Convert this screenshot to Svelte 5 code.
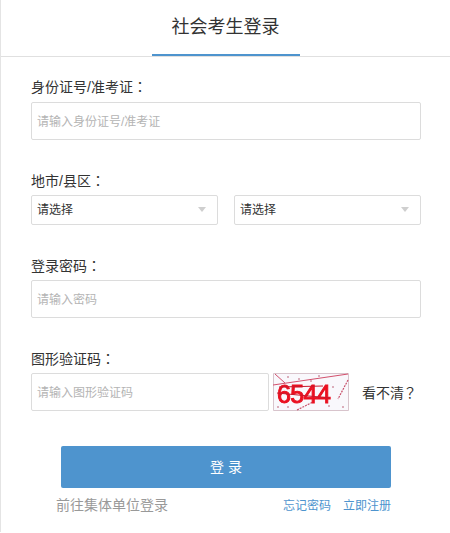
<script>
  // login form for the social candidate tab
  let idNumber = $state('');
  let password = $state('');
  let captcha = $state('');
</script>

<div class="panel">
  <div class="tabs">
    <div class="tab">社会考生登录</div>
  </div>

  <form class="form" onsubmit={(e) => e.preventDefault()}>
    <div class="field id-field">
      <div class="label">身份证号/准考证<span class="wide">：</span></div>
      <input class="text-input" placeholder="请输入身份证号/准考证" bind:value={idNumber} />
    </div>

    <div class="field area-field">
      <div class="label">地市/县区<span class="wide">：</span></div>
      <div class="selects">
        <div class="select">请选择<span class="arrow"></span></div>
        <div class="select">请选择<span class="arrow"></span></div>
      </div>
    </div>

    <div class="field pwd-field">
      <div class="label">登录密码<span class="wide">：</span></div>
      <input class="text-input" type="text" placeholder="请输入密码" bind:value={password} />
    </div>

    <div class="field code-field">
      <div class="label">图形验证码<span class="wide">：</span></div>
      <div class="code-row">
        <input class="text-input code-input" placeholder="请输入图形验证码" bind:value={captcha} />
        <svg class="captcha" viewBox="0 0 76 38" width="76" height="38">
          <rect width="76" height="38" fill="#f9f8fc" />
          <path d="M.5 .5H75.5V37.5H.5Z" fill="none" stroke="#d8c4cc" stroke-width="1" />
          <path d="M2 1L12 10M0 12L75 1" fill="none" stroke="#d2506c" stroke-width="1" />
          <path d="M75 7L65 26M24 37L40 29" fill="none" stroke="#c9526c" stroke-width="1.2" stroke-dasharray="2 1" />
          <text x="4" y="30" class="captcha-text">6544</text>
          <path d="M4 20L57 25M6 14L50 13" stroke="#c8182c" stroke-width="1" />
          <g fill="#b5506a">
            <circle cx="15" cy="4" r="0.8" /><circle cx="46" cy="3" r="0.8" /><circle cx="56" cy="33" r="0.8" />
            <circle cx="5" cy="34" r="0.8" /><circle cx="70" cy="34" r="0.8" /><circle cx="38" cy="8" r="0.8" />
            <circle cx="26" cy="6" r="0.8" /><circle cx="60" cy="14" r="0.8" /><circle cx="15" cy="34" r="0.8" />
          </g>
        </svg>
        <a class="refresh" href="#refresh">看不清<span class="question">？</span></a>
      </div>
    </div>

    <div class="actions">
      <button class="submit" type="submit">登 录</button>
      <div class="links">
        <a class="unit-link" href="#unit">前往集体单位登录</a>
        <span class="right-links">
          <a href="#forgot">忘记密码</a>
          <a href="#register">立即注册</a>
        </span>
      </div>
    </div>
  </form>
</div>

<style>
  :global(body) {
    margin: 0;
    background: #fff;
  }

  .panel {
    width: 450px;
    height: 532px;
    box-sizing: border-box;
    border-left: 1px solid #e4e4e4;
    font-family: "Liberation Sans", "Noto Sans CJK SC", sans-serif;
    color: #333;
    font-size: 14px;
  }

  .tabs {
    height: 57px;
    box-sizing: border-box;
    border-bottom: 1px solid #e0e0e0;
    display: flex;
    justify-content: center;
    padding-left: 2px;
  }

  .tab {
    width: 148px;
    height: 56px;
    box-sizing: border-box;
    border-bottom: 2px solid #4e94ce;
    text-align: center;
    font-size: 18px;
    line-height: 54px;
    color: #333;
    margin-right: 2px;
  }

  .form {
    padding: 0 29px 0 30px;
  }

  .wide,
  .question {
    font-family: "Liberation Sans", "Noto Sans CJK TC", sans-serif;
  }

  .question {
    margin-left: -1px;
  }

  .label {
    height: 22px;
    line-height: 20px;
    margin-bottom: 3px;
  }

  .id-field {
    padding-top: 20px;
  }

  .area-field {
    padding-top: 31px;
  }

  .area-field .label {
    margin-bottom: 2px;
  }

  .pwd-field {
    padding-top: 31px;
  }

  .pwd-field .label {
    margin-bottom: 2px;
  }

  .code-field {
    padding-top: 31px;
  }

  .code-field .label {
    margin-bottom: 2px;
  }

  .text-input {
    display: block;
    width: 100%;
    height: 38px;
    box-sizing: border-box;
    border: 1px solid #dcdcdc;
    border-radius: 2px;
    padding: 2px 5px 0;
    font: inherit;
    font-size: 12px;
    color: #333;
    outline: none;
    background: #fff;
  }

  .text-input::placeholder {
    color: #b4b4b4;
    opacity: 1;
  }

  .selects {
    display: flex;
    gap: 16px;
  }

  .select {
    flex: 1;
    height: 30px;
    box-sizing: border-box;
    border: 1px solid #dcdcdc;
    border-radius: 2px;
    padding: 0 5px;
    font-size: 12px;
    line-height: 28px;
    color: #333;
    position: relative;
  }

  .arrow {
    position: absolute;
    right: 11px;
    top: 11px;
    border-left: 4px solid transparent;
    border-right: 4px solid transparent;
    border-top: 5px solid #cfcfcf;
  }

  .code-row {
    display: flex;
    align-items: center;
  }

  .code-input {
    width: 238px;
    flex: none;
  }

  .captcha {
    margin-left: 4px;
    flex: none;
    filter: blur(0.4px);
  }

  .captcha-text {
    font-family: "Liberation Sans", sans-serif;
    font-size: 25px;
    fill: #ea1020;
    stroke: #ea1020;
    stroke-width: 1px;
    letter-spacing: -0.6px;
  }

  .refresh {
    margin-left: 13px;
    color: #333;
    text-decoration: none;
  }

  .actions {
    padding: 35px 30px 0;
  }

  .submit {
    display: block;
    width: 100%;
    height: 42px;
    border: none;
    border-radius: 2px;
    padding: 0 0 2px;
    background: #4e94ce;
    color: #fff;
    font: inherit;
    cursor: pointer;
  }

  .links {
    display: flex;
    justify-content: space-between;
    align-items: center;
    height: 20px;
    margin-top: 6px;
    font-size: 12px;
  }

  .links a {
    color: #4e94ce;
    text-decoration: none;
  }

  .links .unit-link {
    margin-left: -5px;
    font-size: 14px;
    color: #999;
  }

  .right-links {
    display: flex;
    gap: 12px;
  }
</style>
